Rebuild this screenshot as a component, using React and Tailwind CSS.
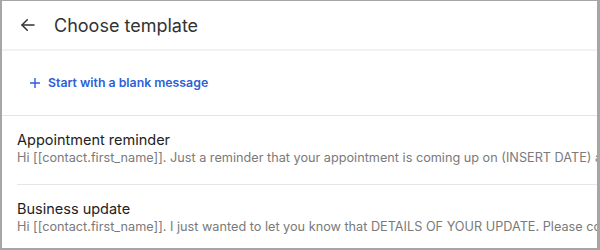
import React from "react";

const font = { fontFamily: "Inter, 'Noto Sans', sans-serif" };

function Item({ title, text, divider }) {
  return (
    <div className="pl-[15px]">
      <div className={`pt-[14px] pb-[18px] ${divider ? "border-b border-[#e6e6e6]" : ""}`}>
        <div className="text-[14.5px] leading-[20px] text-[#222]">{title}</div>
        <div className="text-[12.7px] leading-[16px] text-[#7a7a7a] whitespace-nowrap overflow-hidden">{text}</div>
      </div>
    </div>
  );
}

export default function App() {
  return (
    <div className="w-[600px] h-[250px] bg-[#a6a6a6] pt-px pl-[2px] pr-[3px] pb-[2px]" style={font}>
      <div className="w-full h-full bg-white overflow-hidden flex flex-col">
        <div className="h-[50px] flex items-center border-b-2 border-[#f2f2f2] shrink-0">
          <svg className="ml-[17px]" width="18" height="18" viewBox="0 0 24 24" fill="none" stroke="#333" strokeWidth="2" strokeLinecap="round" strokeLinejoin="round">
            <path d="M20 12H4" />
            <path d="M11 5l-7 7 7 7" />
          </svg>
          <div className="ml-[17px] text-[18px] text-[#333]">Choose template</div>
        </div>
        <div className="h-[65px] flex items-center border-b border-[#e3e3e3] shrink-0 pl-[27px]">
          <svg width="12" height="12" viewBox="0 0 12 12" fill="none" stroke="#2d5fd6" strokeWidth="1.4">
            <path d="M6 1v10M1 6h10" />
          </svg>
          <div className="ml-[7px] text-[12.3px] font-semibold text-[#2d5fd6]">Start with a blank message</div>
        </div>
        <Item
          title="Appointment reminder"
          text="Hi [[contact.first_name]]. Just a reminder that your appointment is coming up on (INSERT DATE) at (INSERT TIME). Please let us know if you need to reschedule."
          divider
        />
        <Item
          title="Business update"
          text="Hi [[contact.first_name]]. I just wanted to let you know that DETAILS OF YOUR UPDATE. Please contact us if you have any questions."
        />
      </div>
    </div>
  );
}
